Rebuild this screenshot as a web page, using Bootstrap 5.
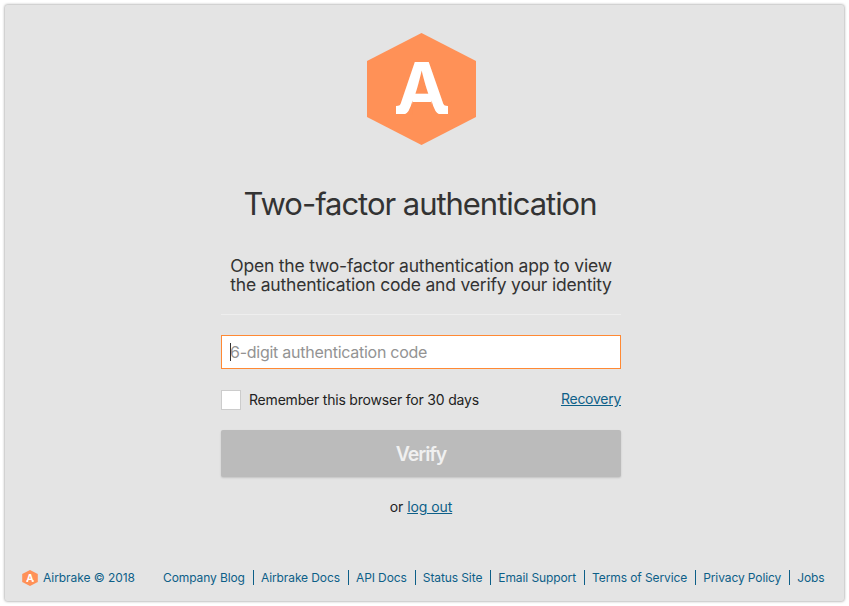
<!DOCTYPE html>
<html lang="en">
<head>
<meta charset="utf-8">
<meta name="viewport" content="width=device-width, initial-scale=1">
<title>Two-factor authentication</title>
<link href="https://cdn.jsdelivr.net/npm/bootstrap@5.3.0/dist/css/bootstrap.min.css" rel="stylesheet">
<style>
body{font-family:Inter,"Liberation Sans",sans-serif;font-size:14px;line-height:20px;color:#333;background:#fff;height:606px;overflow:hidden;padding:5px}
.panel{width:839px;height:596px;background:#e4e4e4;border-radius:2px;box-shadow:0 0 3px rgba(0,0,0,.5)}
.auth{width:400px;margin-left:216px;padding-top:28px}
a,.footer-brand{color:#0d5f88}
a:hover{color:#084664}
.brand-mark{width:109px;height:112px}
h1{font-size:31px;line-height:38px;letter-spacing:-1.04px;margin:40px 0 33px -2px;color:#333;white-space:nowrap}
.intro{font-size:17.5px;line-height:19px;letter-spacing:-.2px;margin:0 -10px;white-space:nowrap}
.rule{height:1px;background:#eee;margin:20px 0}
.code-field{height:34px;border:1px solid #ff8934;border-radius:0;padding:0 8px;font-size:16px;letter-spacing:-.26px;background:#fff;transition:none}
.code-field,.code-field:focus{border-style:solid;border-color:#ff8934;box-shadow:none}
.code-field::placeholder{color:#939393;opacity:1}
.caret{left:9px;top:8px;width:1px;height:18px;background:#333}
.options{margin-top:21px;height:20px}
.form-check-input.remember{width:20px;height:20px;margin:0 8px 0 0;border:1px solid #ccc;border-radius:0;float:none}
.remember-label{letter-spacing:-.2px;color:#222}
.recovery{letter-spacing:-.27px;margin-top:-2px}
.verify{height:47px;margin-top:20px;padding:7px 0 5px;border:0;border-radius:2px;font-size:19.5px;font-weight:600;letter-spacing:-1px;box-shadow:0 1px 2px rgba(0,0,0,.15)}
.verify:disabled{background:#bbb;color:#f0f0f0;opacity:1}
.alt{margin-top:20px;letter-spacing:-.08px;color:#222}
.site-footer{margin:52px 0 0 17px;height:16px;font-size:12px;line-height:15px;letter-spacing:-.095px}
.footer-brand{width:141px;letter-spacing:-.06px}
.footer-brand svg{width:16px;height:16px;margin-right:5px;position:relative;top:1px}
.footer-links li{padding:0 8px 0 7px;border-right:1px solid #0d5f88;white-space:nowrap}
.footer-links li:first-child{padding-left:0}
.footer-links li:last-child{border:0;padding-right:0}
.footer-links a{text-decoration:none}
</style>
</head>
<body>
<svg class="d-none" aria-hidden="true">
  <symbol id="airbrake" viewBox="0 0 109 112">
    <path fill="#ff9157" d="M54.500 0 109 28v56l-54.500 28L0 84V28z"/>
    <text x="28.500" y="81" textLength="53" lengthAdjust="spacingAndGlyphs" font-family="Inter, sans-serif" font-weight="700" font-size="71.500" fill="#fff">A</text>
    <path fill="#ff9157" d="M45.500 67.500Q42 81 37 81.500H46zM64.500 67.500Q68 81 73 81.500H64z"/>
    <path fill="#fff" d="M29 73q4.500 0 5.500-3l8 3q-2 8-6 8H29zM81 73q-4.500 0-5.500-3l-8 3q2 8 6 8H81z"/>
  </symbol>
</svg>
<div class="panel d-flex flex-column">
  <main class="auth text-center">
    <svg class="brand-mark d-block mx-auto" role="img" aria-label="Airbrake"><use href="#airbrake"/></svg>
    <h1 class="fw-normal">Two-factor authentication</h1>
    <p class="intro">Open the two-factor authentication app to view<br>the authentication code and verify your identity</p>
    <div class="rule"></div>
    <form>
      <div class="position-relative">
        <input class="form-control code-field" type="text" placeholder="6-digit authentication code" aria-label="6-digit authentication code">
        <span class="caret position-absolute"></span>
      </div>
      <div class="options d-flex align-items-center justify-content-between">
        <div class="d-flex align-items-center">
          <input class="form-check-input remember" type="checkbox" id="remember">
          <label class="remember-label" for="remember">Remember this browser for 30 days</label>
        </div>
        <a class="recovery" href="#">Recovery</a>
      </div>
      <button class="btn verify w-100 d-block" type="submit" disabled>Verify</button>
    </form>
    <p class="alt mb-0">or <a href="#">log out</a></p>
  </main>
  <footer class="site-footer d-flex align-items-center">
    <div class="footer-brand d-flex align-items-center"><svg aria-hidden="true"><use href="#airbrake"/></svg>Airbrake © 2018</div>
    <ul class="footer-links list-unstyled d-flex mb-0">
      <li><a href="#">Company Blog</a></li>
      <li><a href="#">Airbrake Docs</a></li>
      <li><a href="#">API Docs</a></li>
      <li><a href="#">Status Site</a></li>
      <li><a href="#">Email Support</a></li>
      <li><a href="#">Terms of Service</a></li>
      <li><a href="#">Privacy Policy</a></li>
      <li><a href="#">Jobs</a></li>
    </ul>
  </footer>
</div>
<script src="https://cdn.jsdelivr.net/npm/bootstrap@5.3.0/dist/js/bootstrap.bundle.min.js"></script>
</body>
</html>
